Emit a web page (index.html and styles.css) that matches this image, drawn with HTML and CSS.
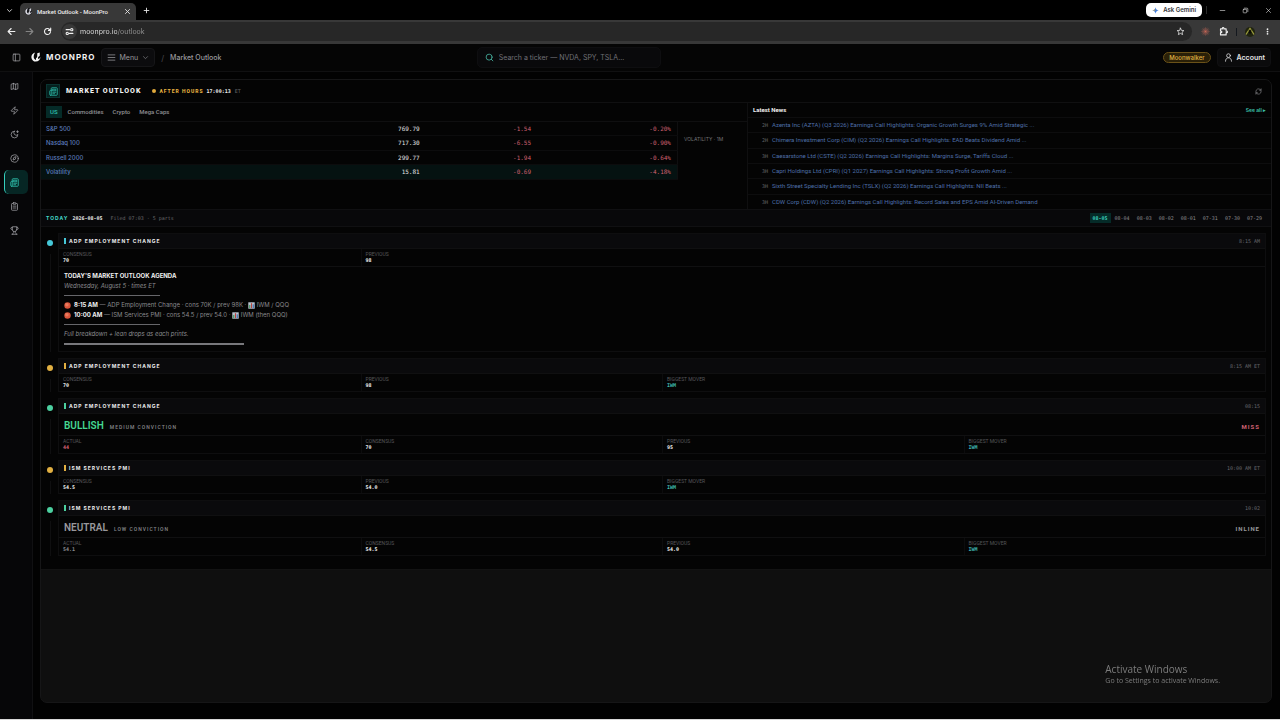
FILE: index.html
```
<!DOCTYPE html>
<html lang="en">
<head>
    <meta charset="UTF-8">
    <meta name="viewport" content="width=device-width, initial-scale=1.0">
    <title>Market Outlook - MoonPro</title>
    <link rel="stylesheet" href="styles.css">
</head>
<body>

    <!-- Icons -->
    <svg class="sprite" aria-hidden="true">
        <symbol id="i-logo" viewBox="0 0 24 24"><path fill="currentColor" stroke="none" d="M10 1C4 3 0 8 1 13.500 1.800 19 6 23 11.500 23 18 23 22.500 18 23 12c-1.500 3-3.500 4.500-6 5v-7l-5 5v4C8.500 18 6.500 15.500 6.500 12 6.500 7.500 8 4 10 1z"/><path fill="currentColor" stroke="none" d="M15 3l6-2v8l-6 5z"/></symbol>
        <symbol id="i-map" viewBox="0 0 24 24"><path d="M9 4 3 6v14l6-2 6 2 6-2V4l-6 2-6-2zM9 4v14M15 6v14"/></symbol>
        <symbol id="i-zap" viewBox="0 0 24 24"><path d="M4 14a1 1 0 0 1-.8-1.600l9.900-10.200a.5.5 0 0 1 .9.500l-2 6a1 1 0 0 0 1 1.300h7a1 1 0 0 1 .8 1.600l-9.900 10.200a.5.5 0 0 1-.9-.5l2-6a1 1 0 0 0-1-1.300z"/></symbol>
        <symbol id="i-moon" viewBox="0 0 24 24"><path d="M12 3a6 6 0 0 0 9 9 9 9 0 1 1-9-9M20 2v5M22.500 4.500h-5"/></symbol>
        <symbol id="i-compass" viewBox="0 0 24 24"><circle cx="12" cy="12" r="10"/><path d="m16 8-2 6-6 2 2-6z"/></symbol>
        <symbol id="i-news" viewBox="0 0 24 24"><path d="M4 22h16a2 2 0 0 0 2-2V4a2 2 0 0 0-2-2H8a2 2 0 0 0-2 2v16a2 2 0 0 1-4 0v-9c0-1.100.9-2 2-2h2M18 14h-8M15 18h-5M10 6h8v4h-8z"/></symbol>
        <symbol id="i-clip" viewBox="0 0 24 24"><rect x="8" y="2" width="8" height="4" rx="1"/><path d="M16 4h2a2 2 0 0 1 2 2v14a2 2 0 0 1-2 2H6a2 2 0 0 1-2-2V6a2 2 0 0 1 2-2h2M8 11h8M8 16h8"/></symbol>
        <symbol id="i-trophy" viewBox="0 0 24 24"><path d="M6 9H4.500a2.500 2.500 0 0 1 0-5H6M18 9h1.500a2.500 2.500 0 0 0 0-5H18M5 22h14M10 14.700V17c0 1-3 1.500-3 5M14 14.700V17c0 1 3 1.500 3 5M18 2H6v7a6 6 0 0 0 12 0z"/></symbol>
        <symbol id="i-side" viewBox="0 0 24 24"><rect x="3" y="3" width="18" height="18" rx="2"/><path d="M9 3v18"/></symbol>
        <symbol id="i-menu" viewBox="0 0 24 24"><path d="M3 5h18M3 12h18M3 19h18"/></symbol>
        <symbol id="i-down" viewBox="0 0 24 24"><path d="m5 9 7 7 7-7"/></symbol>
        <symbol id="i-search" viewBox="0 0 24 24"><circle cx="11" cy="11" r="8"/><path d="m21 21-4.300-4.300"/></symbol>
        <symbol id="i-user" viewBox="0 0 24 24"><circle cx="12" cy="7" r="5"/><path d="M4 22c0-6 3-9 8-9s8 3 8 9"/></symbol>
        <symbol id="i-refresh" viewBox="0 0 24 24"><path d="M3 12a9 9 0 0 1 15-6.700L21 8M21 3v5h-5M21 12a9 9 0 0 1-15 6.700L3 16M3 21v-5h5"/></symbol>
        <symbol id="i-x" viewBox="0 0 24 24"><path d="M5 5l14 14M19 5 5 19"/></symbol>
        <symbol id="i-plus" viewBox="0 0 24 24"><path d="M12 4v16M4 12h16"/></symbol>
        <symbol id="i-back" viewBox="0 0 24 24"><path d="M21 12H4M11 4l-8 8 8 8"/></symbol>
        <symbol id="i-fwd" viewBox="0 0 24 24"><path d="M3 12h17M13 4l8 8-8 8"/></symbol>
        <symbol id="i-reload" viewBox="0 0 24 24"><path d="M20 12a8 8 0 1 1-2.500-5.800L20 8.500M20.500 3v6h-6"/></symbol>
        <symbol id="i-tune" viewBox="0 0 24 24"><path d="M3 7h9M12 17h9"/><circle cx="18" cy="7" r="3"/><circle cx="6" cy="17" r="3"/></symbol>
        <symbol id="i-star" viewBox="0 0 24 24"><path d="m12 3 2.700 6 6.300.6-4.800 4.300 1.400 6.400L12 17l-5.600 3.300 1.400-6.400L3 9.600 9.300 9z"/></symbol>
        <symbol id="i-ext" viewBox="0 0 24 24"><path d="M4 5h5V3.500a2 2 0 0 1 4 0V5h6v6h1.500a2 2 0 0 1 0 4H19v6H4v-6h1.500a2 2 0 0 0 0-4H4z"/></symbol>
        <symbol id="i-claude" viewBox="0 0 24 24"><path d="M12 2v20M2 12h20M5 5l14 14M19 5 5 19M8 3l8 18M16 3 8 21M3 8l18 8M3 16l18-8"/></symbol>
        <symbol id="i-min" viewBox="0 0 24 24"><path d="M4 12h16"/></symbol>
        <symbol id="i-restore" viewBox="0 0 24 24"><rect x="4" y="8" width="12" height="12" rx="2"/><path d="M8 4h9a3 3 0 0 1 3 3v9"/></symbol>
        <symbol id="i-dots" viewBox="0 0 24 24"><g fill="currentColor" stroke="none"><circle cx="12" cy="4" r="3"/><circle cx="12" cy="12" r="3"/><circle cx="12" cy="20" r="3"/></g></symbol>
        <symbol id="i-gemini" viewBox="0 0 24 24"><path fill="#3d7be0" stroke="none" d="M12 1c1 7 4 10 11 11-7 1-10 4-11 11-1-7-4-10-11-11 7-1 10-4 11-11z"/><path fill="#e8b33a" stroke="none" d="M12 12H1c5-1 7-2 9-5z"/></symbol>
        <symbol id="i-red" viewBox="0 0 24 24"><circle cx="12" cy="12" r="11" fill="#d9553c" stroke="none"/><circle cx="10" cy="9" r="6" fill="#ea7a5c" stroke="none"/></symbol>
        <symbol id="i-chart" viewBox="0 0 24 24"><g stroke="none"><rect x="1" y="1" width="22" height="22" fill="#b9c3cf"/><rect x="4" y="10" width="4" height="11" fill="#3f9a5c"/><rect x="10" y="4" width="4" height="17" fill="#b8453f"/><rect x="16" y="8" width="4" height="13" fill="#3a6fb5"/></g></symbol>
    </svg>

    <!-- Browser tabs -->
    <div class="tabstrip">
        <button class="bare tab-list" aria-label="Search tabs"><svg><use href="#i-down"/></svg></button>
        <div class="tab">
            <span class="favicon"><svg><use href="#i-logo"/></svg></span>
            <span class="tab-title">Market Outlook - MoonPro</span>
            <button class="bare" aria-label="Close tab"><svg><use href="#i-x"/></svg></button>
        </div>
        <button class="bare new-tab" aria-label="New tab"><svg><use href="#i-plus"/></svg></button>
        <div class="window-btns">
            <button class="gemini"><svg><use href="#i-gemini"/></svg>Ask Gemini</button>
            <span class="divider"></span>
            <button class="bare" aria-label="Minimize"><svg><use href="#i-min"/></svg></button>
            <button class="bare" aria-label="Restore"><svg><use href="#i-restore"/></svg></button>
            <button class="bare" aria-label="Close"><svg><use href="#i-x"/></svg></button>
        </div>
    </div>

    <!-- Browser toolbar -->
    <div class="toolbar">
        <button class="bare" aria-label="Back"><svg><use href="#i-back"/></svg></button>
        <button class="bare dim" aria-label="Forward"><svg><use href="#i-fwd"/></svg></button>
        <button class="bare" aria-label="Reload"><svg><use href="#i-reload"/></svg></button>
        <div class="address">
            <span class="site-info"><svg><use href="#i-tune"/></svg></span>
            <input type="text" aria-label="Address" value="moonpro.io/outlook">
            <button class="bare" aria-label="Bookmark"><svg><use href="#i-star"/></svg></button>
        </div>
        <div class="extensions">
            <button class="bare claude" aria-label="Claude"><svg><use href="#i-claude"/></svg></button>
            <button class="bare ext" aria-label="Extensions"><svg><use href="#i-ext"/></svg></button>
            <span class="divider"></span>
            <button class="bare avatar" aria-label="Profile"><svg viewBox="0 0 24 24"><circle cx="12" cy="12" r="12" fill="#20240f" stroke="none"/><path d="M12 4l4 8-4 5-4-5z" fill="#0b0c06" stroke="none"/><path d="M3 17l5-8M21 17l-5-8M10 6l2-3 2 3" stroke="#9a9a3c"/></svg></button>
            <button class="bare" aria-label="More"><svg><use href="#i-dots"/></svg></button>
        </div>
    </div>

    <!-- App header -->
    <header>
        <div class="brand-row">
            <button class="bare" aria-label="Toggle sidebar"><svg><use href="#i-side"/></svg></button>
            <a href="#" class="brand"><svg><use href="#i-logo"/></svg>MOONPRO</a>
            <button class="menu-btn"><svg><use href="#i-menu"/></svg>Menu<svg class="chev"><use href="#i-down"/></svg></button>
            <span class="slash">/</span>
            <span class="crumb">Market Outlook</span>
        </div>
        <label class="search">
            <svg><use href="#i-search"/></svg>
            <input type="text" aria-label="Search a ticker" placeholder="Search a ticker — NVDA, SPY, TSLA…">
        </label>
        <div class="account-row">
            <span class="plan">Moonwalker</span>
            <button class="account"><svg><use href="#i-user"/></svg>Account</button>
        </div>
    </header>

    <div class="app">
        <!-- Sidebar -->
        <nav>
            <a href="#" aria-label="Map"><svg><use href="#i-map"/></svg></a>
            <a href="#" aria-label="Flow"><svg><use href="#i-zap"/></svg></a>
            <a href="#" aria-label="Night"><svg><use href="#i-moon"/></svg></a>
            <a href="#" aria-label="Explore"><svg><use href="#i-compass"/></svg></a>
            <a href="#" aria-label="Outlook" class="active"><svg><use href="#i-news"/></svg></a>
            <a href="#" aria-label="Journal"><svg><use href="#i-clip"/></svg></a>
            <a href="#" aria-label="Leaderboard"><svg><use href="#i-trophy"/></svg></a>
        </nav>

        <main>
            <div class="panel">
                <div class="outlook">
                    <div class="panel-head">
                        <span class="head-icon"><svg><use href="#i-news"/></svg></span>
                        <h1>MARKET OUTLOOK</h1>
                        <span class="session">AFTER HOURS</span>
                        <span class="clock">17:00:13</span>
                        <span class="zone">ET</span>
                        <button class="bare refresh" aria-label="Refresh"><svg><use href="#i-refresh"/></svg></button>
                    </div>

                    <div class="overview">
                        <section class="markets">
                            <div class="tabs">
                                <button class="on">US</button>
                                <button>Commodities</button>
                                <button>Crypto</button>
                                <button>Mega Caps</button>
                            </div>
                            <div class="quotes">
                                <table>
                                    <tr><th scope="row">S&amp;P 500</th><td>769.79</td><td class="down">-1.54</td><td class="down">-0.20%</td></tr>
                                    <tr><th scope="row">Nasdaq 100</th><td>717.30</td><td class="down">-6.55</td><td class="down">-0.90%</td></tr>
                                    <tr><th scope="row">Russell 2000</th><td>299.77</td><td class="down">-1.94</td><td class="down">-0.64%</td></tr>
                                    <tr class="selected"><th scope="row">Volatility</th><td>15.81</td><td class="down">-0.69</td><td class="down">-4.18%</td></tr>
                                </table>
                                <div class="chart-label">VOLATILITY · 1M</div>
                            </div>
                        </section>

                        <section class="news">
                            <div class="news-head"><h2>Latest News</h2><a href="#">See all ▸</a></div>
                            <ul>
                                <li><span>2H</span><a href="#">Azenta Inc (AZTA) (Q3 2026) Earnings Call Highlights: Organic Growth Surges 9% Amid Strategic ...</a></li>
                                <li><span>2H</span><a href="#">Chimera Investment Corp (CIM) (Q2 2026) Earnings Call Highlights: EAD Beats Dividend Amid ...</a></li>
                                <li><span>3H</span><a href="#">Caesarstone Ltd (CSTE) (Q2 2026) Earnings Call Highlights: Margins Surge, Tariffs Cloud ...</a></li>
                                <li><span>3H</span><a href="#">Capri Holdings Ltd (CPRI) (Q1 2027) Earnings Call Highlights: Strong Profit Growth Amid ...</a></li>
                                <li><span>3H</span><a href="#">Sixth Street Specialty Lending Inc (TSLX) (Q2 2026) Earnings Call Highlights: NII Beats ...</a></li>
                                <li><span>3H</span><a href="#">CDW Corp (CDW) (Q2 2026) Earnings Call Highlights: Record Sales and EPS Amid AI-Driven Demand</a></li>
                            </ul>
                        </section>
                    </div>

                    <div class="daybar">
                        <span class="today">TODAY</span>
                        <span class="date">2026-08-05</span>
                        <span class="filed">Filed 07:03 · 5 parts</span>
                        <div class="days">
                            <button class="on">08-05</button>
                            <button>08-04</button>
                            <button>08-03</button>
                            <button>08-02</button>
                            <button>08-01</button>
                            <button>07-31</button>
                            <button>07-30</button>
                            <button>07-29</button>
                        </div>
                    </div>

                    <!-- Timeline -->
                    <div class="timeline">
                        <article class="event cyan">
                            <div class="rail"></div>
                            <div class="card">
                                <div class="card-head"><h3>ADP EMPLOYMENT CHANGE</h3><time>8:15 AM</time></div>
                                <dl>
                                    <div><dt>CONSENSUS</dt><dd>70</dd></div>
                                    <div><dt>PREVIOUS</dt><dd>98</dd></div>
                                </dl>
                                <div class="agenda">
                                    <p><strong>TODAY'S MARKET OUTLOOK AGENDA</strong></p>
                                    <p><em>Wednesday, August 5 · times ET</em></p>
                                    <hr>
                                    <p><svg><use href="#i-red"/></svg><strong>8:15 AM</strong> — ADP Employment Change · cons 70K / prev 98K · <svg><use href="#i-chart"/></svg> IWM / QQQ</p>
                                    <p><svg><use href="#i-red"/></svg><strong>10:00 AM</strong> — ISM Services PMI · cons 54.5 / prev 54.0 · <svg><use href="#i-chart"/></svg> IWM (then QQQ)</p>
                                    <hr>
                                    <p><em>Full breakdown + lean drops as each prints.</em></p>
                                    <hr class="thick">
                                </div>
                            </div>
                        </article>

                        <article class="event amber">
                            <div class="rail"></div>
                            <div class="card">
                                <div class="card-head"><h3>ADP EMPLOYMENT CHANGE</h3><time>8:15 AM ET</time></div>
                                <dl>
                                    <div><dt>CONSENSUS</dt><dd>70</dd></div>
                                    <div><dt>PREVIOUS</dt><dd>98</dd></div>
                                    <div><dt>BIGGEST MOVER</dt><dd class="ticker">IWM</dd></div>
                                </dl>
                            </div>
                        </article>

                        <article class="event green">
                            <div class="rail"></div>
                            <div class="card">
                                <div class="card-head"><h3>ADP EMPLOYMENT CHANGE</h3><time>08:15</time></div>
                                <div class="verdict bull"><b>BULLISH</b><span>MEDIUM CONVICTION</span><strong class="miss">MISS</strong></div>
                                <dl>
                                    <div><dt>ACTUAL</dt><dd class="miss">44</dd></div>
                                    <div><dt>CONSENSUS</dt><dd>70</dd></div>
                                    <div><dt>PREVIOUS</dt><dd>95</dd></div>
                                    <div><dt>BIGGEST MOVER</dt><dd class="ticker">IWM</dd></div>
                                </dl>
                            </div>
                        </article>

                        <article class="event amber">
                            <div class="rail"></div>
                            <div class="card">
                                <div class="card-head"><h3>ISM SERVICES PMI</h3><time>10:00 AM ET</time></div>
                                <dl>
                                    <div><dt>CONSENSUS</dt><dd>54.5</dd></div>
                                    <div><dt>PREVIOUS</dt><dd>54.0</dd></div>
                                    <div><dt>BIGGEST MOVER</dt><dd class="ticker">IWM</dd></div>
                                </dl>
                            </div>
                        </article>

                        <article class="event green">
                            <div class="rail"></div>
                            <div class="card">
                                <div class="card-head"><h3>ISM SERVICES PMI</h3><time>10:02</time></div>
                                <div class="verdict"><b>NEUTRAL</b><span>LOW CONVICTION</span><strong>INLINE</strong></div>
                                <dl>
                                    <div><dt>ACTUAL</dt><dd class="flat">54.1</dd></div>
                                    <div><dt>CONSENSUS</dt><dd>54.5</dd></div>
                                    <div><dt>PREVIOUS</dt><dd>54.0</dd></div>
                                    <div><dt>BIGGEST MOVER</dt><dd class="ticker">IWM</dd></div>
                                </dl>
                            </div>
                        </article>
                    </div>
                </div>
            </div>
        </main>
    </div>

    <!-- Desktop watermark -->
    <div class="watermark">
        <p class="wm-title">Activate Windows</p>
        <p>Go to Settings to activate Windows.</p>
    </div>

</body>
</html>
```
FILE: styles.css
```
* { box-sizing: border-box; margin: 0; padding: 0; }

body {
    min-height: 100vh;
    display: flex;
    flex-direction: column;
    background: #020202;
    color: #a0a0a4;
    font-family: Inter, "Liberation Sans", sans-serif;
    font-size: 6px;
    line-height: 8px;
    border-bottom: 1px solid #d8d8d8;
}

a { color: inherit; text-decoration: none; }
ul { list-style: none; }
button, input { font-family: inherit; font-size: inherit; line-height: inherit; color: inherit; background: none; border: none; outline: none; }
button { cursor: pointer; display: flex; align-items: center; }
svg { width: 9px; height: 9px; fill: none; stroke: currentColor; stroke-width: 2; stroke-linecap: round; stroke-linejoin: round; flex-shrink: 0; display: block; }
.sprite { display: none; }
.divider { width: 1px; height: 8px; background: #2a2a2a; }

/* Browser tabs */
.tabstrip { height: 20px; background: #000; display: flex; align-items: center; padding: 0 8px 0 6px; color: #e8e8e8; font-family: Roboto, sans-serif; }
.tabstrip svg { width: 7px; height: 7px; stroke-width: 3; }
.tab { display: flex; align-items: center; gap: 5px; width: 116px; height: 17px; margin: 3px 0 0 7px; padding: 0 5px; background: #383838; border-radius: 5px 5px 0 0; }
.favicon { width: 7px; height: 7px; border-radius: 50%; background: #17181c; color: #d8d8e0; }
.tab-title { flex: 1; font-weight: 500; color: #ececec; }
.new-tab { margin-left: 7px; }
.window-btns { margin-left: auto; display: flex; align-items: center; gap: 16px; }
.window-btns .divider { margin: 0 -4px 0 -12px; }
.window-btns .bare svg { stroke-width: 2; }
.gemini { background: #fff; color: #303134; height: 14px; padding: 0 6px; border-radius: 5px; gap: 4px; font-family: Inter, sans-serif; font-weight: 600; }

/* Browser toolbar */
.toolbar { height: 24px; background: #383838; display: flex; align-items: center; gap: 9px; padding: 0 9px 1px 7px; color: #f0f0f0; }
.toolbar .dim { color: #848484; }
.toolbar svg { stroke-width: 3; }
.address { flex: 1; height: 19px; display: flex; align-items: center; gap: 3px; background: #272727; border-radius: 10px; padding: 0 7px 0 1px; }
.site-info { width: 15px; height: 15px; border-radius: 50%; background: #383838; display: flex; align-items: center; justify-content: center; }
.address input { flex: 1; font-size: 7px; line-height: 12px; color: transparent; background: linear-gradient(90deg, #ececec 37px, #969696 37px); -webkit-background-clip: text; background-clip: text; }
.address button svg { stroke-width: 2; }
.extensions { display: flex; align-items: center; gap: 9px; }
.extensions .divider { background: #14181e; margin: 0 -1px; }
.extensions .claude { color: #cc6a58; }
.extensions .claude svg { stroke-width: 1; }
.extensions .avatar svg { width: 10px; height: 10px; }
.extensions button:last-child svg { width: 7px; height: 7px; }

/* App header */
header { height: 28px; display: flex; align-items: center; padding: 0 9px 0 12px; background: #050505; border-bottom: 1px solid #101011; font-size: 7px; }
.brand-row { display: flex; align-items: center; flex: 1 1 auto; }
.brand { display: flex; align-items: center; gap: 5px; margin: 0 6px 2px 10px; color: #f2f2f2; font-size: 8px; font-weight: 700; letter-spacing: 1px; }
.brand svg { width: 10px; height: 10px; }
.menu-btn { height: 19px; padding: 0 5px; gap: 3px; background: #0c0c0e; border: 1px solid #161618; border-radius: 4px; color: #9a9a9e; }
.menu-btn .chev { width: 7px; height: 7px; margin-left: 1px; }
.slash { margin: 0 6px; color: #4a4a4e; font-size: 8px; }
.crumb { color: #9a9a9e; font-weight: 500; }
.search { display: flex; align-items: center; gap: 5px; width: 184px; height: 21px; margin-left: 4px; padding: 0 7px; background: #09090b; border: 1px solid #0e0e10; border-radius: 5px; color: #4cc4b0; }
.search input { flex: 1; min-width: 0; color: #a0a0a4; }
.search input::placeholder { color: #707076; opacity: 1; }
.account-row { display: flex; align-items: center; justify-content: flex-end; gap: 6px; flex: 2 1 auto; }
.plan { padding: 0 5px; background: #2a2008; border: 1px solid #6b5218; border-radius: 6px; color: #e0b444; font-size: 6px; line-height: 9px; font-weight: 500; }
.account { height: 19px; padding: 0 5px 0 6px; gap: 4px; background: #0b0b0c; border: 1px solid #101012; border-radius: 4px; color: #e4e4e6; font-weight: 600; }

/* Layout */
.app { flex: 1; display: flex; }
nav { width: 33px; padding: 2px 4px; background: #060608; border-right: 1px solid #101012; }
nav a { display: flex; align-items: center; height: 24px; padding-left: 6px; color: #a0a0a6; border-radius: 5px; }
nav a.active { color: #34d0bc; background: #062624; border-left: 1px solid #35d0be; padding-left: 5px; }
main { flex: 1; display: flex; padding: 7px 8px 16px 7px; min-width: 0; }
.panel { flex: 1; min-width: 0; background: #0f0f0f; border: 1px solid #161617; border-radius: 7px; overflow: hidden; }
.outlook { background: #040404; border-bottom: 1px solid #131313; }

/* Panel header */
.panel-head { display: flex; align-items: center; height: 23px; padding: 0 9px 0 5px; border-bottom: 1px solid #101011; }
.head-icon { width: 14px; height: 14px; display: flex; align-items: center; justify-content: center; background: #05211f; border: 1px solid #0a3431; color: #2fc4b0; }
h1 { margin: 0 11px 0 6px; font-family: Roboto, sans-serif; font-size: 7px; font-weight: 800; letter-spacing: 1px; color: #f4f4f4; }
.session { display: flex; align-items: center; gap: 3px; font-family: Roboto, sans-serif; font-size: 5px; font-weight: 800; letter-spacing: 1px; color: #eab442; }
.session::before { content: ""; width: 4px; height: 4px; border-radius: 50%; background: #e0a93c; }
.clock, .zone, .date, .filed, .days, time, td, dd, .news li span { font-family: "DejaVu Sans Mono", "Liberation Mono", monospace; font-size: 5px; }
.clock { margin: 0 4px 0 3px; color: #ececec; font-weight: 700; }
.zone { color: #68686c; }
.refresh { margin-left: auto; color: #96969a; }
.refresh svg { width: 7px; height: 7px; }

/* Markets */
.overview { display: grid; grid-template-columns: 706fr 524fr; }
.tabs { display: flex; align-items: center; gap: 1px; height: 19px; padding-left: 5px; border-bottom: 1px solid #0f0f10; }
.tabs button { height: 12px; padding: 0 4px; color: #909094; font-family: Roboto, sans-serif; font-weight: 500; }
.tabs .on { background: #052b28; color: #2fc0ae; margin-right: 1px; }
.quotes { display: grid; grid-template-columns: 1fr 69px; align-items: start; }
table { width: 100%; height: 58px; border-collapse: collapse; table-layout: fixed; border-right: 1px solid #0f0f10; }
tr { border-bottom: 1px solid #0c0c0d; }
th { text-align: left; padding-left: 5px; color: #5c7cbc; font-size: 6px; font-weight: 500; width: 42%; }
td { text-align: right; font-size: 6px; color: #e4e4e4; width: 17.5%; }
td:last-child { padding-right: 6px; width: 23%; }
td.down { color: #cf6070; }
.selected { background: #051211; }
.chart-label { padding: 13px 0 0 6px; font-size: 5px; color: #727276; white-space: nowrap; }

/* News */
.news { display: flex; flex-direction: column; border-left: 1px solid #0f0f10; font-family: Roboto, sans-serif; }
.news-head { display: flex; align-items: center; justify-content: space-between; height: 14px; padding: 0 5px; }
.news-head a { font-family: Inter, sans-serif; font-size: 5px; font-weight: 600; color: #3cc4ae; }
h2 { font-size: 6px; font-weight: 700; color: #f0f0f0; }
.news ul { display: grid; grid-auto-rows: 1fr; min-height: 92px; }
.news li { display: flex; align-items: center; gap: 4px; padding-left: 14px; border-top: 1px solid #0d0d0e; color: #4e6fa8; }
.news li span { color: #68686c; }

/* Day bar */
.daybar { display: flex; align-items: center; height: 18px; padding: 0 6px 0 5px; background: #08080a; border-top: 1px solid #101012; border-bottom: 1px solid #101012; }
.today { font-size: 5px; font-weight: 700; letter-spacing: 1px; color: #44d8ca; }
.date { margin: 0 8px 0 4px; font-weight: 700; color: #e8e8e8; }
.filed { color: #68686c; }
.days { display: flex; gap: 1px; margin-left: auto; }
.days button { height: 10px; padding: 0 3px; color: #8c8c90; }
.days .on { background: #052b28; color: #38cbbb; font-weight: 700; }

/* Timeline */
.timeline { display: flex; flex-direction: column; gap: 6px; padding: 6px 5px 13px 3px; }
.event { display: grid; grid-template-columns: 12px 1fr; gap: 2px; --dot: #46c8d8; }
.event.amber { --dot: #e2b042; }
.event.green { --dot: #4cd0a0; }
.rail { display: flex; flex-direction: column; align-items: center; gap: 8px; padding-top: 7px; }
.rail::before { content: ""; width: 6px; height: 6px; border-radius: 50%; background: var(--dot); }
.rail::after { content: ""; flex: 1; width: 1px; background: #0f0f10; }
.card { border: 1px solid #0e0e0f; background: #040404; }
.card-head { display: flex; align-items: center; justify-content: space-between; height: 14px; padding: 0 5px; background: #0a0a0c; }
h3 { padding-left: 3px; border-left: 2px solid var(--dot); font-size: 5px; line-height: 6px; font-weight: 700; letter-spacing: 1px; color: #ececee; }
time { color: #68686c; }
dl { display: grid; grid-template-columns: repeat(4, 1fr); height: 18px; border-top: 1px solid #101011; }
dl div { padding: 2px 4px; }
dl div + div { border-left: 1px solid #0c0c0d; }
dt { font-family: Roboto, sans-serif; font-size: 5px; line-height: 6px; color: #56565a; }
dd { font-weight: 700; line-height: 7px; color: #ececec; }
.ticker { color: #3fb8ae; }
.miss { color: #cf6072; }
.flat { color: #8a8a8e; }

.agenda { padding: 4px 5px 2px; border-top: 1px solid #101011; line-height: 10px; color: #8a8a8e; }
.agenda p { display: flex; align-items: center; white-space: pre; }
.agenda svg { width: 7px; height: 7px; }
.agenda strong { color: #f0f0f0; }
.agenda svg + strong { margin-left: 3px; }
.agenda hr { width: 96px; height: 1px; margin: 4px 0; border: none; background: #66666a; }
.agenda hr.thick { width: 180px; height: 2px; background: #78787c; }

.verdict { display: flex; align-items: baseline; gap: 6px; height: 22px; padding: 0 5px; line-height: 23px; border-top: 1px solid #101011; color: #98989c; font-family: Roboto, sans-serif; }
.verdict b { font-size: 10px; font-weight: 600; }
.verdict.bull b { color: #45d893; }
.verdict span { font-size: 5px; font-weight: 500; letter-spacing: 1px; color: #88888c; }
.verdict strong { margin-left: auto; font-size: 6px; letter-spacing: 1px; }
.verdict .miss { color: #cf6072; }

/* Watermark */
.watermark { position: fixed; right: 60px; bottom: 34px; font-family: "Open Sans", "Noto Sans", sans-serif; font-size: 7px; line-height: 10px; color: #7c7c7c; pointer-events: none; }
.wm-title { font-size: 10px; line-height: 13px; }
```
